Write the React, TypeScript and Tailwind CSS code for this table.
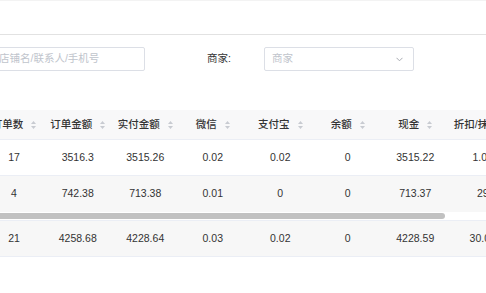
import React from 'react';

const headers = ['订单数', '订单金额', '实付金额', '微信', '支付宝', '余额', '现金', '折扣/抹零'];

const rows: (string | number)[][] = [
  [17, '3516.3', '3515.26', '0.02', '0.02', 0, '3515.22', '1.04'],
  [4, '742.38', '713.38', '0.01', 0, 0, '713.37', 29],
];

const total: (string | number)[] = [21, '4258.68', '4228.64', '0.03', '0.02', 0, '4228.59', '30.04'];

function SortIcon() {
  return (
    <svg width="5" height="8" viewBox="0 0 5 8" className="ml-[8px] shrink-0">
      <path d="M2.5 0 L5 3 L0 3 Z" fill="#c8cbd1" />
      <path d="M0 5 L5 5 L2.5 8 Z" fill="#c8cbd1" />
    </svg>
  );
}

function Cell({ i, children }: { i: number; children: React.ReactNode }) {
  return (
    <div
      className={`${i === 0 ? 'w-[60px]' : 'w-[67.5px]'} shrink-0 flex items-center justify-center whitespace-nowrap`}
    >
      {children}
    </div>
  );
}

function Row({ cells, bg, border }: { cells: (string | number)[]; bg: string; border?: boolean }) {
  return (
    <div className={`flex h-[36px] ${bg} ${border ? 'border-b border-[#ebeef5]' : ''} text-[#333]`}>
      {cells.map((c, i) => (
        <Cell key={i} i={i}>
          {c}
        </Cell>
      ))}
    </div>
  );
}

export default function App() {
  return (
    <div className="w-[486px] h-[293px] overflow-hidden bg-white font-['Liberation_Sans','Noto_Sans_CJK_SC',sans-serif] text-[10.5px]">
      {/* page header strip */}
      <div className="h-[35px] border-t border-b border-t-[#f3f3f3] border-b-[#e2e2e2]" />

      {/* filters */}
      <div className="flex items-center mt-[12px] h-[24px]">
        <div className="-ml-[10px] w-[155px] h-[24px] border border-[#dcdfe6] rounded-[2px] flex items-center pl-[8px] text-[#c0c4cc] whitespace-nowrap">
          店铺名/联系人/手机号
        </div>
        <div className="ml-[62px] text-[#333]">商家:</div>
        <div className="ml-[33px] w-[150px] h-[24px] border border-[#dcdfe6] rounded-[2px] flex items-center justify-between pl-[7px] pr-[10px] text-[#c0c4cc]">
          <span>商家</span>
          <svg width="7" height="5" viewBox="0 0 7 5">
            <path d="M0.5 0.8 L3.5 3.8 L6.5 0.8" fill="none" stroke="#a8abb2" strokeWidth="1" />
          </svg>
        </div>
      </div>

      {/* table */}
      <div className="mt-[39px] -ml-[16px] w-[600px]">
        <div className="flex h-[30px] bg-[#f8f8f9] border-b border-[#ebeef5] text-[#333] font-medium">
          {headers.map((h, i) => (
            <Cell key={h} i={i}>
              <span>{h}</span>
              <SortIcon />
            </Cell>
          ))}
        </div>
        <Row cells={rows[0]} bg="bg-white" border />
        <Row cells={rows[1]} bg="bg-[#f7f7f7]" />

        {/* horizontal scrollbar */}
        <div className="h-[8px] flex items-center bg-white">
          <div className="w-[461px] h-[6px] rounded-full bg-[#c1c1c1]" />
        </div>

        <div className="flex h-[37px] bg-[#f7f7f7] border-t border-b border-[#ebeef5] text-[#333]">
          {total.map((c, i) => (
            <Cell key={i} i={i}>
              {c}
            </Cell>
          ))}
        </div>
      </div>
    </div>
  );
}
